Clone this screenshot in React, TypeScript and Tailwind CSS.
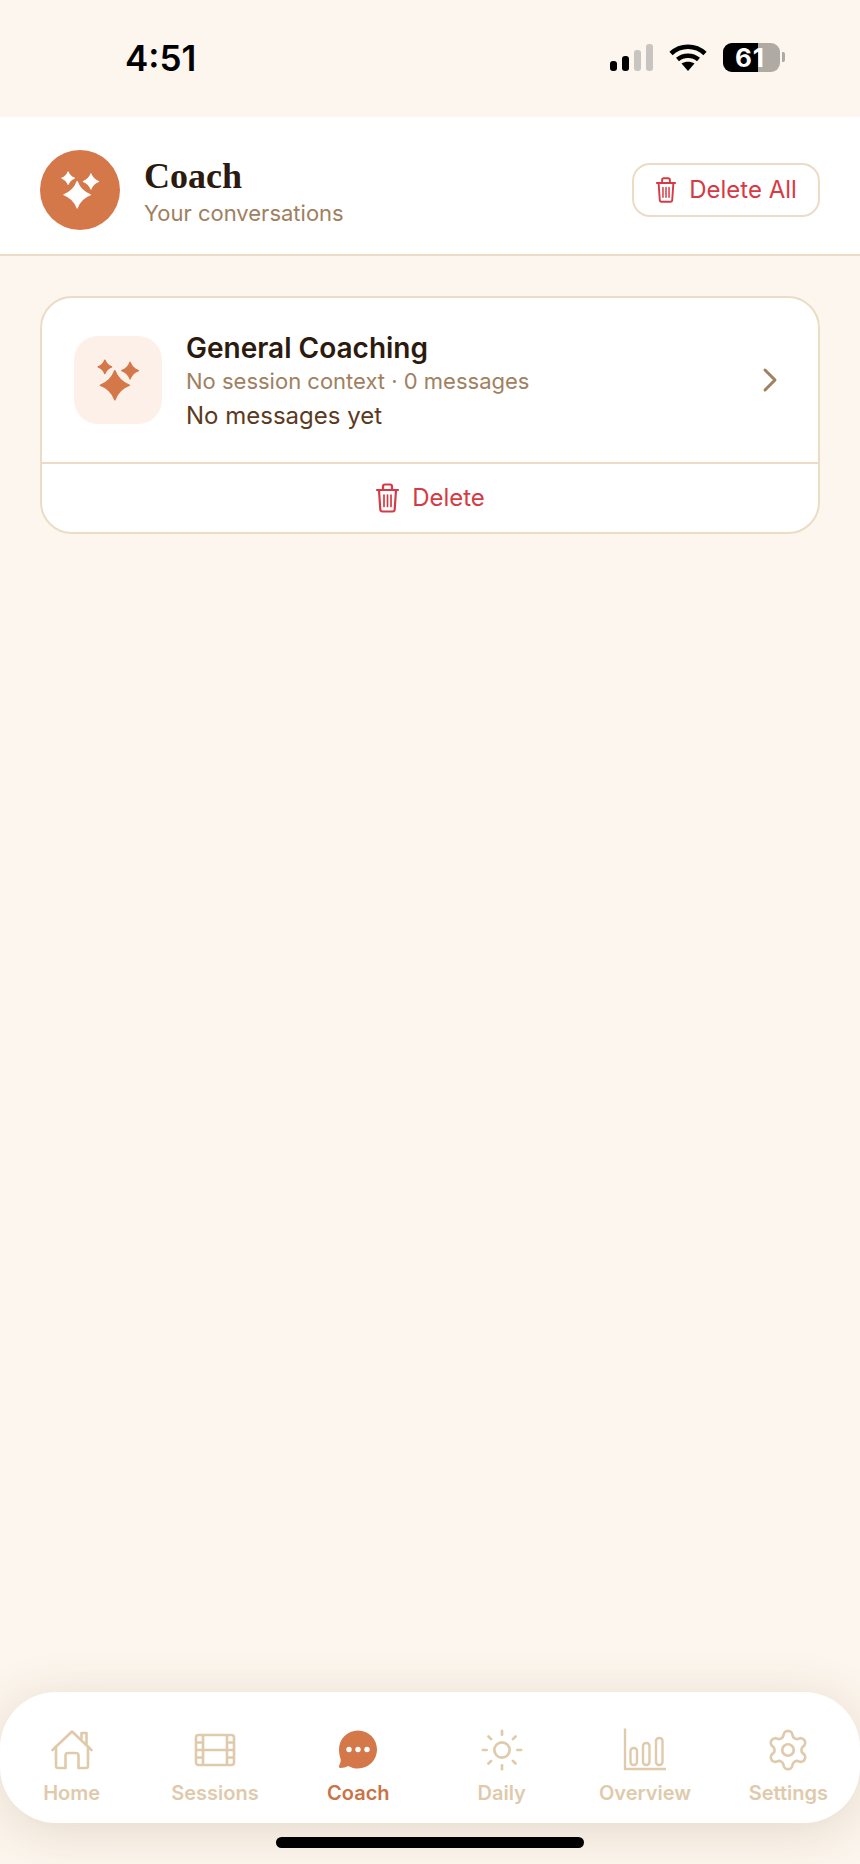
import React from "react";
import { ChevronRight, Sun, Settings } from "lucide-react";

const star = (cx: number, cy: number, r: number) => {
  const k = r * 0.27;
  return `M${cx} ${cy - r}Q${cx + k} ${cy - k} ${cx + r} ${cy}Q${cx + k} ${cy + k} ${cx} ${cy + r}Q${cx - k} ${cy + k} ${cx - r} ${cy}Q${cx - k} ${cy - k} ${cx} ${cy - r}Z`;
};

function Sparkles({ className }: { className: string }) {
  return (
    <svg viewBox="0 0 40 40" className={className} fill="currentColor" stroke="currentColor" strokeWidth="1.2" strokeLinejoin="round">
      <path d={star(17, 25, 14)} />
      <path d={star(7.5, 7.5, 6.5)} />
      <path d={star(31.5, 11, 8)} />
    </svg>
  );
}

function Trash({ className }: { className: string }) {
  return (
    <svg viewBox="0 0 24 30" className={className} fill="none" stroke="currentColor" strokeWidth="2.2" strokeLinecap="round" strokeLinejoin="round">
      <path d="M1.500 7h21" />
      <path d="M7.500 7V3.500A2 2 0 0 1 9.500 1.500h5a2 2 0 0 1 2 2V7" />
      <path d="M3.500 7l1.300 19.500A2.200 2.200 0 0 0 7 28.500h10a2.200 2.200 0 0 0 2.200-2L20.500 7" />
      <path d="M8.500 12v11.500M12 12v11.500M15.500 12v11.500" strokeWidth="1.7" />
    </svg>
  );
}

function HomeIcon() {
  return (
    <svg viewBox="0 0 44 44" className="w-[44px] h-[44px]" fill="none" stroke="currentColor" strokeWidth="2.6" strokeLinecap="round" strokeLinejoin="round">
      <path d="M2.500 22L22 3.500 41.500 22" />
      <path d="M31.500 10.500V5h5v12" />
      <path d="M6 19v19a2 2 0 0 0 2 2h7.500V27.500a2.500 2.500 0 0 1 2.500-2.500h8a2.500 2.500 0 0 1 2.500 2.500V40H36a2 2 0 0 0 2-2V19" />
    </svg>
  );
}

function FilmIcon() {
  return (
    <svg viewBox="0 0 44 44" className="w-[44px] h-[44px]" fill="none" stroke="currentColor" strokeWidth="2.6" strokeLinejoin="round">
      <rect x="3" y="7" width="38" height="30" rx="2.500" />
      <path d="M10 7v30M34 7v30M10 22h24M3 14.500h7M3 22h7M3 29.500h7M34 14.500h7M34 22h7M34 29.500h7" />
    </svg>
  );
}

function ChatIcon() {
  return (
    <svg viewBox="0 0 44 44" className="w-[44px] h-[44px]">
      <path d="M22 2.500C32.500 2.500 41 11 41 21.500S32.500 40.500 22 40.500c-3.500 0-6.800-.9-9.600-2.600-2.500 1.300-5.300 1.900-8 2-1.200 0-1.900-1.200-1.300-2.200 1.100-1.900 1.700-4.100 1.600-6.500C3.700 28.200 3 24.900 3 21.500 3 11 11.500 2.500 22 2.500Z" fill="#d4784a" />
      <circle cx="13" cy="21.500" r="2.700" fill="#fff" />
      <circle cx="22" cy="21.500" r="2.700" fill="#fff" />
      <circle cx="31" cy="21.500" r="2.700" fill="#fff" />
    </svg>
  );
}

function ChartIcon() {
  return (
    <svg viewBox="0 0 44 44" className="w-[44px] h-[44px]" fill="none" stroke="currentColor" strokeWidth="2.400" strokeLinejoin="round">
      <path d="M2 0.500V41h41" />
      <rect x="7.500" y="20" width="6.500" height="17" rx="3" />
      <rect x="20" y="15" width="6.500" height="22" rx="3" />
      <rect x="33" y="10" width="6.500" height="27" rx="3" />
    </svg>
  );
}

function Tab({ label, icon, active }: { label: string; icon: React.ReactNode; active?: boolean }) {
  return (
    <div className={active ? "flex-1 flex flex-col items-center text-[#cb7246]" : "flex-1 flex flex-col items-center text-[#e0caac]"}>
      <div className="h-[44px] flex items-center justify-center">{icon}</div>
      <span className="mt-[9px] text-[20px] leading-[24px] font-semibold">{label}</span>
    </div>
  );
}

export default function App() {
  return (
    <div className="w-[860px] h-[1864px] flex flex-col bg-[#fdf6ee] overflow-hidden font-['Inter',sans-serif]">
      <div className="h-[117px] shrink-0 flex justify-between pl-[125px] pr-[75px] pt-[37px] items-start">
        <span className="text-[35px] leading-[42px] font-semibold text-black">4:51</span>
        <div className="flex items-center h-[40px] gap-[16px]">
          <div className="flex items-end gap-[5px] h-[27px]">
            <div className="w-[7px] h-[10px] rounded-[3px] bg-black" />
            <div className="w-[7px] h-[15px] rounded-[3px] bg-black" />
            <div className="w-[7px] h-[21px] rounded-[3px] bg-[#c8c4c0]" />
            <div className="w-[7px] h-[27px] rounded-[3px] bg-[#c8c4c0]" />
          </div>
          <svg viewBox="0 0 38 28" className="w-[38px] h-[28px]" fill="none" stroke="#000" strokeWidth="4.600">
            <path d="M2 10.500C11.500 1.500 26.500 1.500 36 10.500" />
            <path d="M8.500 16.500C14.500 11.500 23.500 11.500 29.500 16.500" />
            <path d="M19 28l-6.500-7.500c3.800-2.400 9.200-2.400 13 0Z" fill="#000" stroke="none" />
          </svg>
          <div className="flex items-center gap-[2px]">
            <div className="relative w-[57px] h-[29px] rounded-[9px] bg-[#b0aaa4] flex items-center justify-center">
              <div className="absolute left-0 top-0 bottom-0 w-[35px] rounded-l-[9px] bg-black" />
              <span className="relative text-white text-[26px] leading-[26px] font-bold tracking-[1px] mr-[3px] mt-[2px]">61</span>
            </div>
            <div className="w-[3px] h-[10px] rounded-r-[2px] bg-[#b0aaa4]" />
          </div>
        </div>
      </div>

      <header className="h-[139px] shrink-0 bg-white border-b-2 border-[#ecdcc6] flex items-center justify-between pl-[40px] pr-[40px] pt-[9px]">
        <div className="flex items-center gap-[24px]">
          <div className="w-[80px] h-[80px] rounded-full bg-[#d4784a] flex items-center justify-center text-white">
            <Sparkles className="w-[38px] h-[38px]" />
          </div>
          <div className="flex flex-col pt-[2px]">
            <h1 className="text-[36px] leading-[42px] font-bold text-[#2c1a0e] font-['Liberation_Serif',serif]">Coach</h1>
            <p className="text-[22px] leading-[28px] text-[#a08060] mt-[2px]">Your conversations</p>
          </div>
        </div>
        <button className="w-[188px] h-[54px] rounded-[18px] border-2 border-[#ecdcc6] flex items-center justify-center gap-[12px] text-[#d63a45] text-[24px]">
          <Trash className="w-[22px] h-[26px]" />
          <span>Delete All</span>
        </button>
      </header>

      <main className="flex-1 px-[40px] pt-[40px]">
        <div className="rounded-[32px] border-2 border-[#ecdcc6] bg-white overflow-hidden">
          <div className="h-[166px] flex items-center pl-[32px] pr-[28px] border-b-2 border-[#ecdcc6]">
            <div className="w-[88px] h-[88px] rounded-[24px] bg-[#fdf0e8] flex items-center justify-center text-[#d4784a] shrink-0">
              <Sparkles className="w-[42px] h-[42px]" />
            </div>
            <div className="ml-[24px] flex-1 flex flex-col pt-[4px]">
              <span className="text-[28px] leading-[34px] font-semibold text-[#2c1a0e]">General Coaching</span>
              <span className="text-[22px] leading-[33px] text-[#a08060]">No session context · 0 messages</span>
              <span className="text-[24px] leading-[34px] text-[#5c3a21] mt-[1px]">No messages yet</span>
            </div>
            <ChevronRight className="w-[40px] h-[40px] text-[#a08060]" strokeWidth={1.8} />
          </div>
          <div className="h-[68px] flex items-center justify-center gap-[12px] text-[#d63a45] text-[24px]">
            <Trash className="w-[25px] h-[30px]" />
            <span>Delete</span>
          </div>
        </div>
      </main>

      <nav className="h-[131px] shrink-0 bg-white rounded-[56px] shadow-[0_8px_50px_rgba(100,70,30,0.17)] flex items-start pt-[36px] relative">
        <Tab label="Home" icon={<HomeIcon />} />
        <Tab label="Sessions" icon={<FilmIcon />} />
        <Tab label="Coach" active icon={<ChatIcon />} />
        <Tab label="Daily" icon={<Sun className="w-[46px] h-[46px]" strokeWidth={1.4} />} />
        <Tab label="Overview" icon={<ChartIcon />} />
        <Tab label="Settings" icon={<Settings className="w-[46px] h-[46px]" strokeWidth={1.4} />} />
      </nav>
      <div className="h-[41px] shrink-0 flex justify-center pt-[14px] relative">
        <div className="w-[308px] h-[11px] rounded-full bg-black" />
      </div>
    </div>
  );
}
